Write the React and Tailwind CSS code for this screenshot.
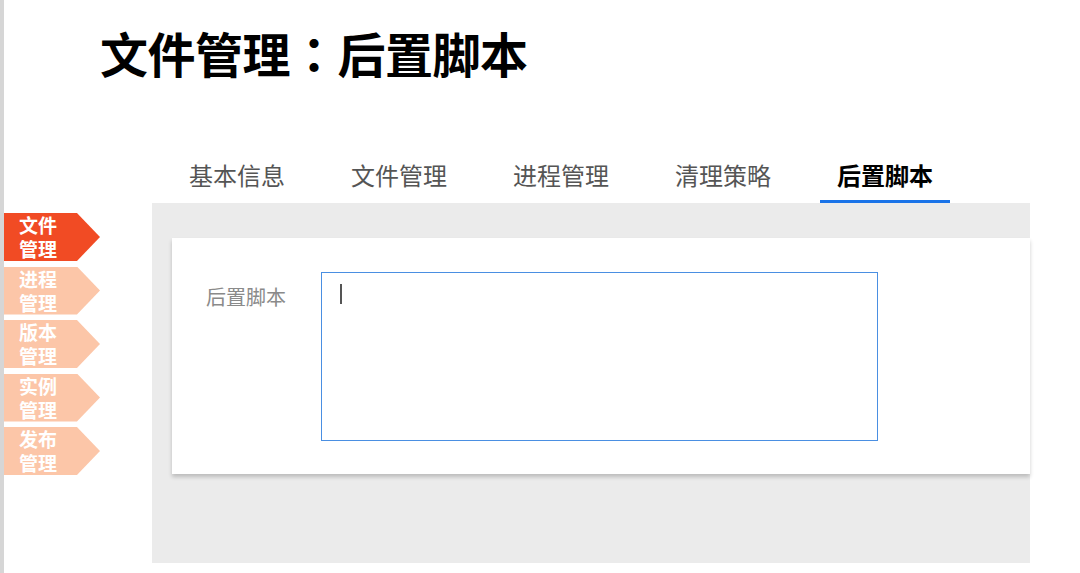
import React from "react";

const font = { fontFamily: '"Noto Sans CJK SC", "Noto Sans", sans-serif' };

const sideItems = [
  ["文件", "管理", true],
  ["进程", "管理", false],
  ["版本", "管理", false],
  ["实例", "管理", false],
  ["发布", "管理", false],
];

const tabs = ["基本信息", "文件管理", "进程管理", "清理策略", "后置脚本"];

export default function App() {
  return (
    <div
      className="w-[1080px] h-[573px] bg-white border-l-4 border-[#d6d6d6] flex flex-col overflow-hidden"
      style={font}
    >
      <div className="h-[155px] pl-[96px] pt-[23px]">
        <h1 className="text-[48px] leading-[58px] font-bold text-black tracking-[-0.5px]">
          文件管理
          <span style={{ fontFamily: '"Noto Sans CJK TC", sans-serif' }}>：</span>
          后置脚本
        </h1>
      </div>
      <div className="flex flex-1">
        <div className="w-[148px] pt-[58px] flex flex-col gap-[5.5px]">
          {sideItems.map(([a, b, active], i) => (
            <div
              key={i}
              className={
                "w-[96px] h-[48px] pl-[15px] flex flex-col justify-center text-white font-bold text-[19px] leading-[24px] [clip-path:polygon(0_0,76%_0,100%_50%,76%_100%,0_100%)] " +
                (active ? "bg-[#f14b24]" : "bg-[#fcc6a8]")
              }
            >
              <span>{a}</span>
              <span>{b}</span>
            </div>
          ))}
        </div>
        <div className="w-[878px] flex flex-col">
          <div className="h-[48px] flex pl-[20px] gap-[32px]">
            {tabs.map((t, i) => {
              const active = i === tabs.length - 1;
              return (
                <div
                  key={t}
                  className={
                    "h-full px-[17px] flex items-center text-[24px] leading-none border-b-[3px] " +
                    (active
                      ? "border-[#1a73e8] text-black font-bold"
                      : "border-transparent text-[#555]")
                  }
                >
                  <span className="-mt-[5px]">{t}</span>
                </div>
              );
            })}
          </div>
          <div className="h-[360px] bg-[#ebebeb] pl-[20px] pt-[35px]">
            <div className="bg-white h-[236px] shadow-[0_3px_4px_rgba(0,0,0,0.2)] flex pl-[34px] pt-[34px]">
              <div className="w-[115px] pt-[13px] text-[20px] leading-[24px] text-[#8a8a8a]">
                后置脚本
              </div>
              <div className="w-[557px] h-[169px] border-[1.5px] border-[#4a8fe2] pl-[18px] pt-[11px]">
                <div className="w-[2px] h-[20px] bg-[#555]" />
              </div>
            </div>
          </div>
        </div>
      </div>
    </div>
  );
}
